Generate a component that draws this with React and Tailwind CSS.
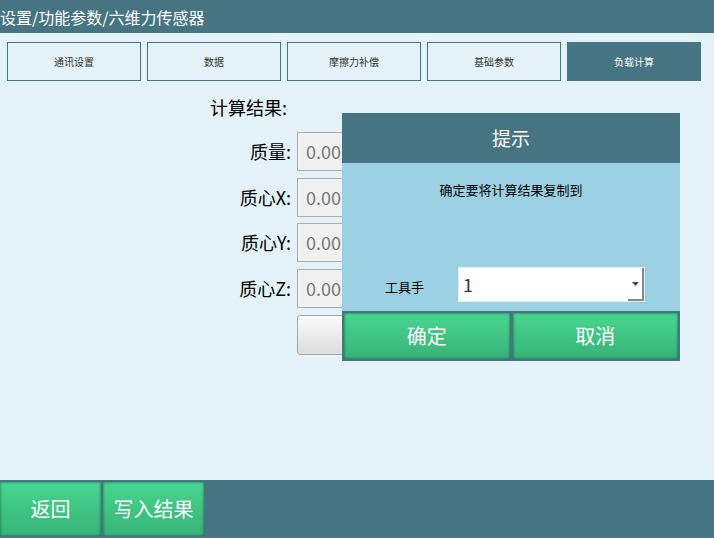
import React from "react";

const font = { fontFamily: '"Noto Sans CJK SC", "Noto Sans", sans-serif' };

function GreenBtn({ children, className = "" }) {
  return (
    <div
      className={
        "flex items-center justify-center text-white text-[20px] bg-gradient-to-b from-[#48d690] to-[#37b377] shadow-[inset_0_0_3px_rgba(0,60,40,0.7)] " +
        className
      }
    >
      {children}
    </div>
  );
}

export default function App() {
  const tabs = ["通讯设置", "数据", "摩擦力补偿", "基础参数", "负载计算"];
  const rows = ["质量:", "质心X:", "质心Y:", "质心Z:"];
  return (
    <div
      className="relative w-[714px] h-[538px] bg-[#e3f2f8] flex flex-col overflow-hidden"
      style={font}
    >
      <div className="h-[33px] bg-[#467482] flex items-center text-white text-[16px] leading-none">
        设置/功能参数/六维力传感器
      </div>
      <div className="flex gap-[6px] pl-[7px] pt-[9px]">
        {tabs.map((t, i) => (
          <div
            key={t}
            className={
              "w-[134px] h-[39px] flex items-center justify-center text-[10px] " +
              (i === 4
                ? "bg-[#467482] text-white"
                : "border-[1.5px] border-[#467482] text-[#333]")
            }
          >
            {t}
          </div>
        ))}
      </div>
      <div className="flex-1 relative">
        <div className="pl-[210px] pt-[14px] text-[18px] leading-[24px] text-black">
          计算结果:
        </div>
        <div className="grid grid-cols-[91px_180px] gap-x-[6px] gap-y-[6.67px] pl-[200px] pt-[13px]">
          {rows.map((r) => (
            <React.Fragment key={r}>
              <div className="flex items-center justify-end text-[18px] text-black">
                {r}
              </div>
              <div className="h-[39px] bg-[#f0f0f0] border border-[#acacac] flex items-center pl-[8px] text-[18px] text-[#777]">
                0.00
              </div>
            </React.Fragment>
          ))}
          <div />
          <div className="h-[40px] rounded-[3px] border border-[#a8a8a8] bg-gradient-to-b from-[#fafafa] to-[#dcdcdc]" />
        </div>
      </div>
      <div className="h-[58px] bg-[#467482] flex gap-[2px] pt-[2px] pb-[2px]">
        <GreenBtn className="w-[101px]">返回</GreenBtn>
        <GreenBtn className="w-[101px]">写入结果</GreenBtn>
      </div>

      <div className="absolute left-[342px] top-[113px] w-[338px] h-[248px] flex flex-col bg-[#9bd0e2]">
        <div className="h-[50px] bg-[#467482] flex items-center justify-center text-white text-[19px]">
          提示
        </div>
        <div className="h-[148px] relative">
          <div className="pt-[17px] text-center text-[13px] text-black">
            确定要将计算结果复制到
          </div>
          <div className="absolute left-[43px] top-[114px] text-[13px] text-black">
            工具手
          </div>
          <div className="absolute left-[116px] top-[104px] w-[187px] h-[35px] bg-white border border-[#e6eef2] flex items-center">
            <span className="pl-[4px] text-[18px] text-[#333] flex-1">1</span>
            <div className="w-[16px] h-[33px] border-r-2 border-b-2 border-[#888] flex items-center justify-center">
              <svg width="7" height="4" viewBox="0 0 7 4">
                <path d="M0 0H7L3.5 4Z" fill="#444" />
              </svg>
            </div>
          </div>
        </div>
        <div className="flex-1 bg-[#467482] flex gap-[3px] p-[2px]">
          <GreenBtn className="flex-1">确定</GreenBtn>
          <GreenBtn className="flex-1">取消</GreenBtn>
        </div>
      </div>
    </div>
  );
}
